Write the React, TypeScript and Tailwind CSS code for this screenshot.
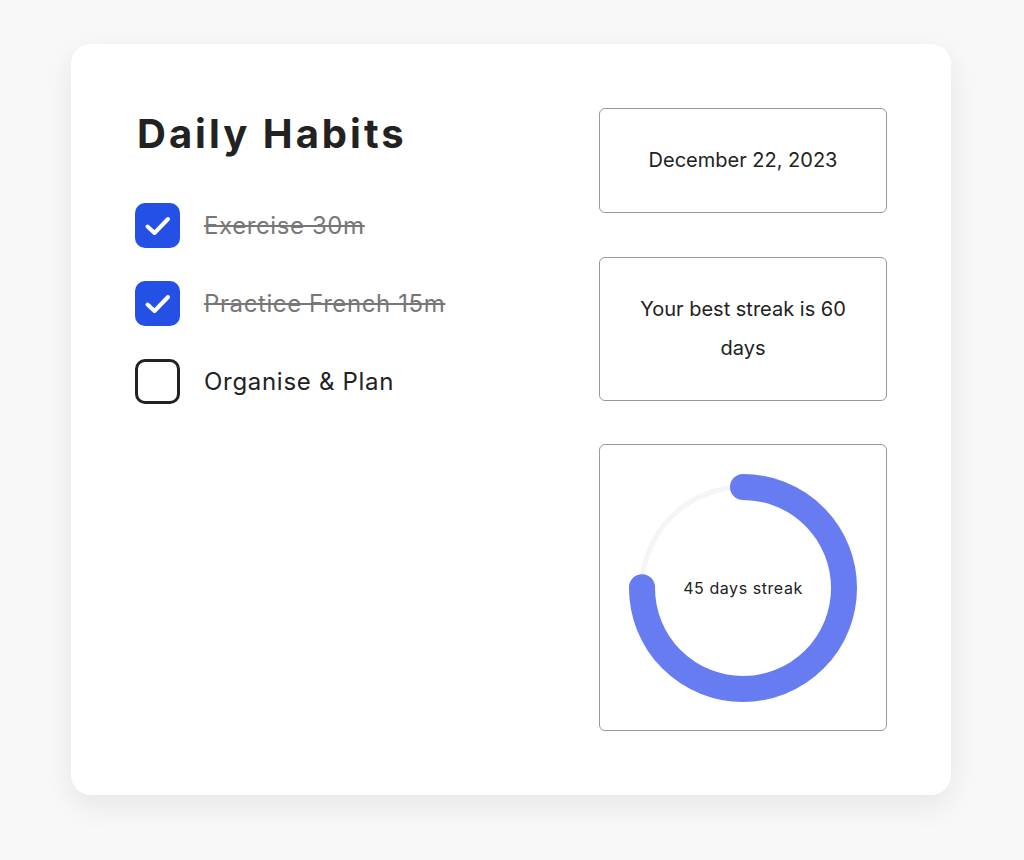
import React from 'react';

type Habit = { label: string; done: boolean };

const habits: Habit[] = [
  { label: 'Exercise 30m', done: true },
  { label: 'Practice French 15m', done: true },
  { label: 'Organise & Plan', done: false },
];

function CheckBox({ done }: { done: boolean }) {
  if (!done) {
    return <div className="w-[45px] h-[45px] rounded-[10px] border-[3px] border-[#222222] shrink-0" />;
  }
  return (
    <div className="w-[45px] h-[45px] rounded-[10px] bg-[#2450e6] shrink-0 flex items-center justify-center">
      <svg width="45" height="45" viewBox="0 0 45 45" fill="none">
        <path d="M12.5 23.5 L19.5 30 L33 16" stroke="white" strokeWidth="4" strokeLinecap="round" strokeLinejoin="round" />
      </svg>
    </div>
  );
}

function StreakRing({ days, best }: { days: number; best: number }) {
  const r = 101;
  const c = 2 * Math.PI * r;
  const pct = days / best;
  return (
    <div className="relative w-[228px] h-[228px]">
      <svg width="228" height="228" viewBox="0 0 228 228" className="-rotate-90">
        <circle cx="114" cy="114" r={r} stroke="#f5f5f5" strokeWidth="5" fill="none" />
        <circle
          cx="114"
          cy="114"
          r={r}
          stroke="#677cf0"
          strokeWidth="26"
          fill="none"
          strokeLinecap="round"
          strokeDasharray={`${c * pct} ${c}`}
        />
      </svg>
      <div className="absolute inset-0 flex items-center justify-center text-[16px] tracking-[0.035em] text-[#222222]">
        {days} days streak
      </div>
    </div>
  );
}

export default function App() {
  return (
    <div className="min-h-[860px] bg-[#f8f8f8] pt-[44px] font-['Inter',sans-serif]">
      <div className="ml-[71px] w-[880px] bg-white rounded-[20px] shadow-[0_10px_30px_rgba(0,0,0,0.08)] p-16 flex justify-between">
        <div className="flex flex-col">
          <h1 className="pt-[2px] pl-[2px] text-[40px] leading-[48px] font-bold text-[#222222] tracking-[0.075em]">
            Daily Habits
          </h1>
          <div className="mt-[45px] flex flex-col gap-[33px]">
            {habits.map((h) => (
              <div key={h.label} className="flex items-center gap-[24px]">
                <CheckBox done={h.done} />
                <span
                  className={
                    h.done
                      ? 'text-[24px] tracking-[0.6px] text-[#777777] line-through'
                      : 'text-[24px] tracking-[0.7px] text-[#222222]'
                  }
                >
                  {h.label}
                </span>
              </div>
            ))}
          </div>
        </div>
        <div className="w-[288px] flex flex-col">
          <div className="border border-[#999999] rounded-[6px] p-8 text-center text-[20px] leading-[39px] text-[#222222]">
            December 22, 2023
          </div>
          <div className="mt-[44px] border border-[#999999] rounded-[6px] p-8 text-center text-[20px] leading-[39px] text-[#222222]">
            Your best streak is 60 days
          </div>
          <div className="mt-[43px] border border-[#999999] rounded-[6px] h-[287px] flex items-center justify-center">
            <StreakRing days={45} best={60} />
          </div>
        </div>
      </div>
    </div>
  );
}
